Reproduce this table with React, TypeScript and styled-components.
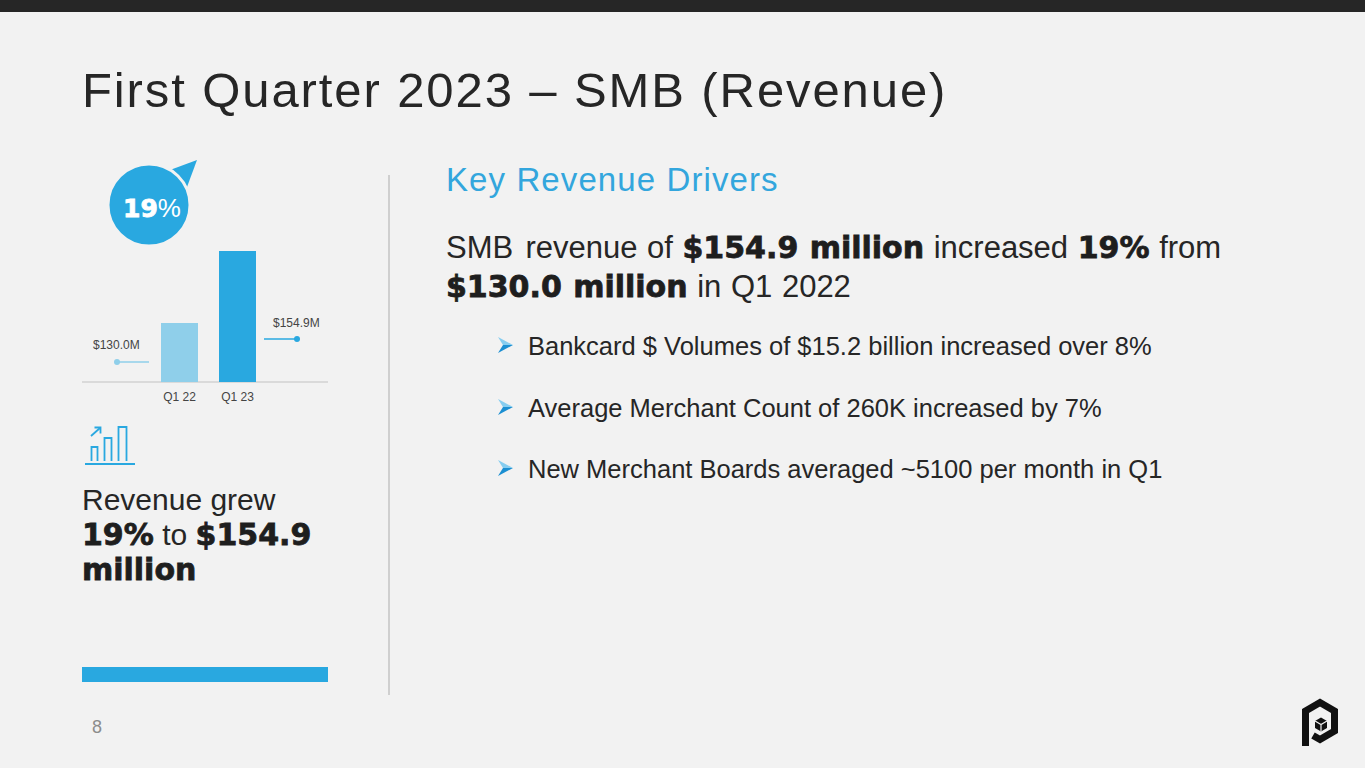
import styled, { createGlobalStyle } from "styled-components";

const GlobalStyle = createGlobalStyle`
  html, body {
    margin: 0;
    padding: 0;
    background: #f2f2f2;
  }
  body {
    font-family: "Liberation Sans", Arial, sans-serif;
    color: #262626;
  }
`;

const BLUE = "#29a8e0";
const LIGHT_BLUE = "#8fcfea";

const Page = styled.div`
  width: 1365px;
  height: 768px;
  display: flex;
  flex-direction: column;
  background: #f2f2f2;
  overflow: hidden;
  position: relative;
`;

const TopBar = styled.div`
  height: 12px;
  background: #262626;
  flex-shrink: 0;
`;

const Title = styled.h1`
  margin: 50px 0 0 82px;
  font-size: 49px;
  line-height: 56px;
  font-weight: 400;
  letter-spacing: 1.9px;
  color: #262626;
`;

const Content = styled.div`
  display: flex;
  align-items: flex-start;
  margin: 40px 0 0 82px;
`;

const LeftCol = styled.div`
  width: 246px;
  display: flex;
  flex-direction: column;
`;

const Chart = styled.svg`
  display: block;
  width: 246px;
  height: 248px;
  overflow: visible;
`;

const GrowthIcon = styled.svg`
  display: block;
  width: 56px;
  height: 42px;
  margin-top: 18px;
`;

const Summary = styled.p`
  margin: 16px 0 0;
  font-size: 30px;
  line-height: 35px;
  color: #262626;
`;

const Heavy = styled.b<{ $size?: number }>`
  font-family: "DejaVu Sans", sans-serif;
  font-weight: 700;
  font-size: ${(p) => (p.$size ? `${p.$size}px` : "inherit")};
  color: #1e1e1e;
  -webkit-text-stroke: 0.8px #1e1e1e;
`;

const AccentBar = styled.div`
  height: 15px;
  margin-top: 80px;
  background: ${BLUE};
`;

const PageNumber = styled.div`
  margin: 35px 0 0 10px;
  font-size: 18px;
  line-height: 20px;
  color: #8c8c8c;
`;

const Divider = styled.div`
  width: 2px;
  height: 520px;
  margin: 17px 0 0 60px;
  background: #cfcfcf;
`;

const RightCol = styled.div`
  margin-left: 56px;
  display: flex;
  flex-direction: column;
`;

const Heading = styled.h2`
  margin: 2px 0 0;
  font-size: 33px;
  line-height: 40px;
  font-weight: 400;
  letter-spacing: 1.1px;
  color: #33a6dd;
`;

const Lead = styled.p`
  margin: 28px 0 0;
  font-size: 31px;
  line-height: 39px;
  word-spacing: 1px;
  color: #262626;
`;

const Bullets = styled.ul`
  list-style: none;
  margin: 25px 0 0;
  padding: 0 0 0 52px;
  display: flex;
  flex-direction: column;
  gap: 31.5px;
`;

const Bullet = styled.li`
  display: flex;
  align-items: center;
  gap: 15px;
  font-size: 25.5px;
  line-height: 30px;
  color: #262626;
`;

const Arrow = styled.svg`
  width: 15px;
  height: 16px;
  flex-shrink: 0;
  margin-top: -2px;
`;

const Logo = styled.svg`
  position: absolute;
  right: 23px;
  bottom: 19px;
  width: 42px;
  height: 52px;
`;

const BulletArrow = () => (
  <Arrow viewBox="0 0 15 16">
    <polygon points="0,0 15,8 5,8" fill="#86cdf0" />
    <polygon points="0,16 15,8 5,8" fill="#1b8fd2" />
  </Arrow>
);

const bullets = [
  "Bankcard $ Volumes of $15.2 billion increased over 8%",
  "Average Merchant Count of 260K increased by 7%",
  "New Merchant Boards averaged ~5100 per month in Q1",
];

const App = () => (
  <Page>
    <GlobalStyle />
    <TopBar />
    <Title>First Quarter 2023 – SMB (Revenue)</Title>
    <Content>
      <LeftCol>
        <Chart viewBox="0 0 246 248">
          <polygon points="88,12 115,2 105,29" fill={BLUE} />
          <circle cx="67" cy="47" r="41" fill={BLUE} stroke="#f2f2f2" strokeWidth="3" />
          <text x="41" y="59" fill="#fff">
            <tspan fontFamily="DejaVu Sans" fontWeight="700" fontSize="25" stroke="#fff" strokeWidth="0.8">
              19
            </tspan>
            <tspan fontFamily="Liberation Sans" fontSize="26">%</tspan>
          </text>
          <line x1="0" y1="224" x2="246" y2="224" stroke="#d2d2d2" strokeWidth="1.5" />
          <rect x="79" y="165" width="37" height="59" fill={LIGHT_BLUE} />
          <rect x="137" y="93" width="37" height="131" fill={BLUE} />
          <g fontFamily="Liberation Sans" fontSize="12" fill="#444">
            <text x="97.5" y="243" textAnchor="middle">Q1 22</text>
            <text x="155.5" y="243" textAnchor="middle">Q1 23</text>
            <text x="11" y="191">$130.0M</text>
            <text x="191" y="169">$154.9M</text>
          </g>
          <line x1="35" y1="204" x2="67" y2="204" stroke={LIGHT_BLUE} strokeWidth="1.5" />
          <circle cx="35" cy="204" r="3" fill={LIGHT_BLUE} />
          <line x1="182" y1="181" x2="215" y2="181" stroke={BLUE} strokeWidth="1.5" />
          <circle cx="215" cy="181" r="3" fill={BLUE} />
        </Chart>
        <GrowthIcon viewBox="0 0 56 42" fill="none" stroke={BLUE} strokeWidth="1.8">
          <line x1="3" y1="40" x2="53" y2="40" />
          <path d="M9.5 37 V23 H15.5 V37" />
          <path d="M22.5 37 V14 H29.5 V37" />
          <path d="M36.5 37 V3 H44.5 V37" />
          <path d="M9 12 L18 4" />
          <path d="M12.5 3.5 H18.5 V9.5" />
        </GrowthIcon>
        <Summary>
          Revenue grew
          <br />
          <Heavy>19%</Heavy> to <Heavy>$154.9</Heavy>
          <br />
          <Heavy>million</Heavy>
        </Summary>
        <AccentBar />
        <PageNumber>8</PageNumber>
      </LeftCol>
      <Divider />
      <RightCol>
        <Heading>Key Revenue Drivers</Heading>
        <Lead>
          SMB{"\u200A"} revenue of <Heavy $size={30}>$154.9 million</Heavy> increased{" "}
          <Heavy $size={30}>19%</Heavy> from
          <br />
          <Heavy $size={30}>$130.0 million</Heavy> in Q1 2022
        </Lead>
        <Bullets>
          {bullets.map((b) => (
            <Bullet key={b}>
              <BulletArrow />
              {b}
            </Bullet>
          ))}
        </Bullets>
      </RightCol>
    </Content>
    <Logo viewBox="0 0 42 52">
      <path
        d="M5.5 49 V14 L20 5.5 L34.5 14 V34 L20 42.5 L13 38.5"
        fill="none"
        stroke="#111"
        strokeWidth="7"
        strokeLinejoin="miter"
      />
      <polygon points="21,20.5 27,24 27,31 21,34.5 15,31 15,24" fill="#111" />
      <path d="M15 24 L21 27.5 L27 24 M21 27.5 V34.5" stroke="#f2f2f2" strokeWidth="1.2" fill="none" />
    </Logo>
  </Page>
);

export default App;
